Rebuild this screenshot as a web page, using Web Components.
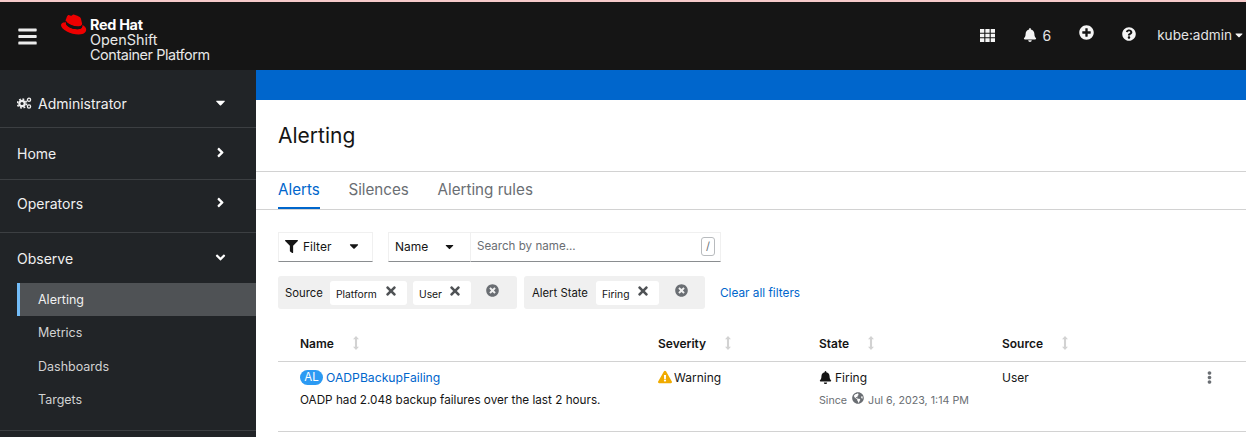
<!DOCTYPE html>
<html>
<head>
<meta charset="utf-8">
<title>Alerting</title>
<style>
html, body { margin: 0; height: 100%; overflow: hidden; background: #fff; font-family: Inter, "Liberation Sans", sans-serif; }
</style>
</head>
<body>
<ocp-app></ocp-app>
<script>
const ICONS = {
    bars: ["0 0 448 512", "M16 132h416c8.837 0 16-7.163 16-16V76c0-8.837-7.163-16-16-16H16C7.163 60 0 67.163 0 76v40c0 8.837 7.163 16 16 16zm0 160h416c8.837 0 16-7.163 16-16v-40c0-8.837-7.163-16-16-16H16c-8.837 0-16 7.163-16 16v40c0 8.837 7.163 16 16 16zm0 160h416c8.837 0 16-7.163 16-16v-40c0-8.837-7.163-16-16-16H16c-8.837 0-16 7.163-16 16v40c0 8.837 7.163 16 16 16z"],
    grid: ["0 0 14 14", "M0 1h4v3.4H0zM5 1h4v3.4H5zM10 1h4v3.4h-4zM0 5.3h4v3.4H0zM5 5.3h4v3.4H5zM10 5.3h4v3.4h-4zM0 9.6h4V13H0zM5 9.6h4V13H5zM10 9.6h4V13h-4z"],
    bell: ["0 0 448 512", "M224 512c35.32 0 63.97-28.65 63.97-64H160.03c0 35.35 28.65 64 63.97 64zm215.39-149.71c-19.32-20.76-55.47-51.99-55.47-154.29 0-77.7-54.48-139.9-127.94-155.16V32c0-17.67-14.32-32-31.98-32s-31.98 14.33-31.98 32v20.84C118.56 68.1 64.08 130.3 64.08 208c0 102.3-36.15 133.53-55.47 154.29-6 6.45-8.66 14.16-8.61 21.71.11 16.4 12.98 32 32.1 32h383.8c19.12 0 32-15.6 32.1-32 .05-7.55-2.61-15.27-8.61-21.71z"],
    plus: ["0 0 512 512", "M256 8C119 8 8 119 8 256s111 248 248 248 248-111 248-248S393 8 256 8zm144 276c0 6.6-5.4 12-12 12h-92v92c0 6.6-5.4 12-12 12h-56c-6.6 0-12-5.4-12-12v-92h-92c-6.6 0-12-5.4-12-12v-56c0-6.6 5.4-12 12-12h92v-92c0-6.6 5.4-12 12-12h56c6.6 0 12 5.4 12 12v92h92c6.6 0 12 5.4 12 12v56z"],
    help: ["0 0 512 512", "M504 256c0 136.997-111.043 248-248 248S8 392.997 8 256C8 119.083 119.043 8 256 8s248 111.083 248 248zM262.655 90c-54.497 0-89.255 22.957-116.549 63.758-3.536 5.286-2.353 12.415 2.715 16.258l34.699 26.31c5.205 3.947 12.621 3.008 16.665-2.122 17.864-22.658 30.113-35.797 57.303-35.797 20.429 0 45.698 13.148 45.698 32.958 0 14.976-12.363 22.667-32.534 33.976C247.128 238.528 216 254.941 216 296v4c0 6.627 5.373 12 12 12h56c6.627 0 12-5.373 12-12v-1.333c0-28.462 83.186-29.647 83.186-106.667 0-58.002-60.165-102-116.531-102zM256 338c-25.365 0-46 20.635-46 46 0 25.364 20.635 46 46 46s46-20.636 46-46c0-25.365-20.635-46-46-46z"],
    caret: ["0 0 320 512", "M31.3 192h257.3c17.8 0 26.7 21.5 14.1 34.1L174.1 354.8c-7.8 7.8-20.5 7.8-28.3 0L17.2 226.1C4.6 213.5 13.5 192 31.3 192z"],
    right: ["0 0 256 512", "M224.3 273l-136 136c-9.4 9.4-24.6 9.4-33.9 0l-22.6-22.6c-9.4-9.4-9.4-24.6 0-33.9l96.4-96.4-96.4-96.4c-9.4-9.4-9.4-24.6 0-33.9L54.3 103c9.4-9.4 24.6-9.4 33.9 0l136 136c9.5 9.4 9.5 24.6.1 34z"],
    down: ["0 0 320 512", "M143 352.3L7 216.3c-9.4-9.4-9.4-24.6 0-33.9l22.6-22.6c9.4-9.4 24.6-9.4 33.9 0l96.4 96.4 96.4-96.4c9.4-9.4 24.6-9.4 33.9 0l22.6 22.6c9.4 9.4 9.4 24.6 0 33.9l-136 136c-9.2 9.4-24.4 9.4-33.8 0z"],
    filter: ["0 0 512 512", "M487.976 0H24.028C2.71 0-8.047 25.866 7.058 40.971L192 225.941V432c0 7.831 3.821 15.17 10.237 19.662l80 55.98C298.02 518.69 320 507.493 320 487.98V225.941l184.947-184.97C520.021 25.896 509.338 0 487.976 0z"],
    times: ["0 0 352 512", "M242.72 256l100.07-100.07c12.28-12.28 12.28-32.19 0-44.48l-22.24-22.24c-12.28-12.28-32.19-12.28-44.48 0L176 189.28 75.93 89.21c-12.28-12.28-32.19-12.28-44.48 0L9.21 111.45c-12.28 12.28-12.28 32.19 0 44.48L109.28 256 9.21 356.07c-12.28 12.28-12.28 32.19 0 44.48l22.24 22.24c12.28 12.28 32.2 12.28 44.48 0L176 322.72l100.07 100.07c12.28 12.28 32.2 12.28 44.48 0l22.24-22.24c12.28-12.28 12.28-32.19 0-44.48L242.72 256z"],
    timesCircle: ["0 0 512 512", "M256 8C119 8 8 119 8 256s111 248 248 248 248-111 248-248S393 8 256 8zm121.6 313.1c4.7 4.7 4.7 12.3 0 17L338 377.6c-4.7 4.7-12.3 4.7-17 0L256 312l-65.1 65.6c-4.7 4.7-12.3 4.7-17 0L134.4 338c-4.7-4.7-4.7-12.3 0-17l65.6-65-65.6-65.1c-4.7-4.7-4.7-12.3 0-17l39.6-39.6c4.7-4.7 12.3-4.7 17 0l65 65.7 65.1-65.6c4.7-4.7 12.3-4.7 17 0l39.6 39.6c4.7 4.7 4.7 12.3 0 17L312 256l65.6 65.1z"],
    warning: ["0 0 576 512", "M569.517 440.013C587.975 472.007 564.806 512 527.94 512H48.054c-36.937 0-59.999-40.055-41.577-71.987L246.423 24.035c18.467-32.009 64.72-31.951 83.154 0l239.94 416zM288 354c-25.405 0-46 20.595-46 46s20.595 46 46 46 46-20.595 46-46-20.595-46-46-46zm-43.673-165.346l7.418 136c.347 6.364 5.609 11.346 11.982 11.346h48.546c6.373 0 11.635-4.982 11.982-11.346l7.418-136c.375-6.874-5.098-12.654-11.982-12.654h-63.383c-6.884 0-12.356 5.78-11.981 12.654z"],
    globe: ["0 0 496 512", "M248 8C111.03 8 0 119.03 0 256s111.03 248 248 248 248-111.03 248-248S384.97 8 248 8zm82.29 357.6c-3.9 3.88-7.99 7.95-11.31 11.28-2.99 3-5.1 6.7-6.17 10.71-1.51 5.66-2.73 11.38-4.77 16.87l-17.39 46.85c-13.76 3-28 4.69-42.65 4.69v-27.38c1.69-12.62-7.64-36.26-22.63-51.25-6-6-9.37-14.14-9.37-22.63v-32.01c0-11.64-6.27-22.34-16.46-27.97-14.37-7.95-34.81-19.06-48.81-26.11-11.48-5.78-22.1-13.14-31.65-21.75l-.8-.72a114.792 114.792 0 0 1-18.06-20.74c-9.38-13.77-24.66-36.42-34.59-51.14 20.47-45.5 57.36-82.04 103.2-101.89l24.01 12.01C203.48 89.74 216 82.01 216 70.11v-11.3c7.99-1.29 16.12-2.11 24.45-2.4l28.3 28.3c6.25 6.25 6.25 16.38 0 22.63L264 112l-10.34 10.34c-3.12 3.12-3.12 8.19 0 11.31l4.69 4.69c3.12 3.12 3.12 8.19 0 11.31l-8 8a8.008 8.008 0 0 1-5.67 2.34h-8.99c-2.08 0-4.08.81-5.58 2.27l-9.92 9.65a8.008 8.008 0 0 0-1.58 9.31l15.59 31.19c2.66 5.32-1.21 11.58-7.15 11.58h-5.64c-1.93 0-3.79-.7-5.24-1.96l-9.28-8.06a16.017 16.017 0 0 0-15.55-3.1l-31.17 10.39a11.95 11.95 0 0 0-8.17 11.34c0 4.53 2.56 8.66 6.61 10.69l11.08 5.54c9.41 4.71 19.79 7.16 30.31 7.16s22.59 27.29 32 32h66.75c8.49 0 16.62 3.37 22.63 9.37l13.69 13.69a30.503 30.503 0 0 1 8.93 21.57 46.536 46.536 0 0 1-13.72 32.98zM417 274.25c-5.79-1.45-10.84-5-14.15-9.97l-17.98-26.97a23.97 23.97 0 0 1 0-26.62l19.59-29.38c2.32-3.47 5.5-6.29 9.24-8.15l12.98-6.49C440.2 193.59 448 223.87 448 256c0 8.67-.74 17.16-1.82 25.54L417 274.25z"],
    kebab: ["0 0 192 512", "M96 184c39.8 0 72 32.2 72 72s-32.2 72-72 72-72-32.2-72-72 32.2-72 72-72zM24 80c0 39.8 32.2 72 72 72s72-32.2 72-72S135.8 8 96 8 24 40.2 24 80zm0 352c0 39.8 32.2 72 72 72s72-32.2 72-72-32.2-72-72-72-72 32.2-72 72z"],
    sort: ["0 0 10 16", "M5 0 8.4 3.6H6.2v8.8h2.2L5 16 1.6 12.4h2.2V3.6H1.6z"]
};

class OcpIcon extends HTMLElement {
    connectedCallback() {
        const [box, d] = ICONS[this.getAttribute("name")];
        const size = this.getAttribute("size") || "14";
        this.attachShadow({mode: "open"}).innerHTML = `
            <style>
                :host { display: inline-flex; flex: none; color: inherit; }
                svg { display: block; width: ${size}px; height: ${size}px; fill: currentColor; }
            </style>
            <svg viewBox="${box}"><path d="${d}"/></svg>`;
    }
}

class OcpMasthead extends HTMLElement {
    connectedCallback() {
        this.attachShadow({mode: "open"}).innerHTML = `
            <style>
                :host { display: flex; align-items: center; height: 68px; background: #151515; color: #f0f0f0; flex: none; }
                .toggle { display: flex; margin-left: 17px; margin-right: 21px; color: #ececec; }
                .brand { display: flex; gap: 3px; align-items: flex-start; margin-top: 5px; }
                .brand svg { display: block; width: 28px; height: 22px; margin-top: -2px; }
                .name { font-size: 14.400px; line-height: 15px; font-weight: 400; color: #e8e8e8; white-space: nowrap; padding-top: 1px; }
                .name b { display: block; color: #fff; font-weight: 700; letter-spacing: -.3px; }
                .name span { letter-spacing: -.42px; }
                .tools { margin-left: auto; display: flex; align-items: center; font-size: 13.600px; color: #e4e4e4; padding-right: 1px; margin-top: -2px; }
                .tools ocp-icon { color: #f5f5f5; }
                .bell { display: flex; align-items: center; gap: 5px; margin: 0 28px 0 28px; font-size: 14px; }
                .plus { margin-top: -2px; margin-right: 28px; }
                .help { margin-right: 21px; }
                .user { display: flex; align-items: center; gap: 1px; white-space: nowrap; }
            </style>
            <span class="toggle"><ocp-icon name="bars" size="21"></ocp-icon></span>
            <div class="brand">
                <svg viewBox="0 0 28 22">
                    <path fill="#e00" d="M18.6 12.6c1.8 0 4.500-.4 4.500-2.500 0-.2 0-.3 0-.5l-1.100-4.700c-.2-1-.5-1.500-2.300-2.400C18.300 1.800 15.300.6 14.400.6c-.8 0-1.100 1.100-2.100 1.100-.9 0-1.600-.8-2.500-.8-.8 0-1.400.6-1.800 1.700 0 0-1.200 3.400-1.400 3.900 0 .1 0 .2 0 .3 0 1.300 5.300 5.800 12.000 5.800z"/>
                    <path fill="#e00" d="M23.100 11c.2 1.100.2 1.200.2 1.300 0 1.900-2.100 2.900-4.800 2.900-6.200 0-11.600-3.600-11.600-6 0-.3.100-.7.200-1-2.200.1-5.100.5-5.100 3 0 4.200 9.900 9.300 17.700 9.300 6 0 7.500-2.700 7.500-4.900 0-1.700-1.500-3.700-4.100-4.600z"/>
                    <path fill="#151515" d="M23.100 10.100c.2 1.100.2 1.900.2 2.200 0 1.900-2.100 2.900-4.800 2.900-6.200 0-11.600-3.600-11.600-6 0-.3.200-1.500.4-2.100 0 1.300 5.300 5.500 11.300 5.500 1.800 0 4.500-.4 4.500-2.500z"/>
                </svg>
                <div class="name"><b>Red Hat</b>OpenShift<br><span>Container Platform</span></div>
            </div>
            <div class="tools">
                <ocp-icon name="grid" size="15"></ocp-icon>
                <span class="bell"><ocp-icon name="bell" size="14"></ocp-icon><span>6</span></span>
                <span class="plus"><ocp-icon name="plus" size="15"></ocp-icon></span>
                <span class="help"><ocp-icon name="help" size="14"></ocp-icon></span>
                <span class="user">kube:admin<ocp-icon name="caret" size="12"></ocp-icon></span>
            </div>`;
    }
}

// one block of the left nav, row height and vertical nudge come from attributes
class OcpNavSection extends HTMLElement {
    connectedCallback() {
        const icon = this.getAttribute("arrow");
        const top = this.getAttribute("top") || 0;
        const bottom = this.getAttribute("bottom") || 0;
        this.attachShadow({mode: "open"}).innerHTML = `
            <style>
                :host { display: block; border-bottom: 1px solid #3c3f42; }
                .row { display: flex; align-items: center; box-sizing: border-box; height: ${this.getAttribute("height")}px; padding: ${top}px 28.500px ${bottom}px 17px; font-size: 14px; color: #f0f0f0; }
                .row ocp-icon { margin: -2px 0 0 auto; color: #fff; }
                :host([open]) .sub { padding-bottom: 13.500px; }
            </style>
            <div class="row"><slot name="label"></slot><ocp-icon name="${icon}" size="15"></ocp-icon></div>
            <div class="sub"><slot></slot></div>`;
    }
}

class OcpNavLink extends HTMLElement {
    connectedCallback() {
        this.attachShadow({mode: "open"}).innerHTML = `
            <style>
                :host { display: flex; align-items: center; height: 33.500px; margin-left: 17px; padding-left: 21px; font-size: 12.500px; color: #d2d2d2; }
                :host([current]) { height: 33px; background: #4f5255; box-shadow: inset 3px 0 0 #73bcf7; color: #f0f0f0; }
            </style>
            <slot></slot>`;
    }
}

class OcpSidebar extends HTMLElement {
    connectedCallback() {
        this.attachShadow({mode: "open"}).innerHTML = `
            <style>
                :host { display: block; width: 256px; flex: none; background: #212427; }
                .persp { display: inline-flex; align-items: center; gap: 6px; }
                .persp svg { width: 15px; height: 12px; fill: #f0f0f0; }
            </style>
            <ocp-nav-section height="57" top="9" arrow="caret">
                <span slot="label" class="persp">
                    <svg viewBox="0 0 15 12">
                        <circle cx="5" cy="6.500" r="2.700" fill="none" stroke="#f0f0f0" stroke-width="2.200"/>
                        <circle cx="5" cy="6.500" r="4.500" fill="none" stroke="#f0f0f0" stroke-width="1.600" stroke-dasharray="1.800 1.730"/>
                        <circle cx="12" cy="2.800" r="1.600" fill="none" stroke="#f0f0f0" stroke-width="1.300"/>
                        <circle cx="12" cy="9.500" r="1.600" fill="none" stroke="#f0f0f0" stroke-width="1.300"/>
                    </svg>Administrator</span>
            </ocp-nav-section>
            <ocp-nav-section height="51" arrow="right"><span slot="label">Home</span></ocp-nav-section>
            <ocp-nav-section height="52" bottom="6" arrow="right"><span slot="label">Operators</span></ocp-nav-section>
            <ocp-nav-section height="50" arrow="down" open>
                <span slot="label">Observe</span>
                <ocp-nav-link current>Alerting</ocp-nav-link>
                <ocp-nav-link>Metrics</ocp-nav-link>
                <ocp-nav-link>Dashboards</ocp-nav-link>
                <ocp-nav-link>Targets</ocp-nav-link>
            </ocp-nav-section>`;
    }
}

class OcpTabs extends HTMLElement {
    connectedCallback() {
        this.attachShadow({mode: "open"}).innerHTML = `
            <style>
                :host { display: flex; gap: 28.600px; padding-left: 22px; height: 37px; border-bottom: 1px solid #d2d2d2; font-size: 15.200px; color: #6a6e73; flex: none; }
                span { display: flex; align-items: center; padding-bottom: 2px; box-sizing: border-box; height: 37px; }
                .on { color: #06c; box-shadow: inset 0 -2px 0 #06c; }
            </style>
            <span class="on">Alerts</span><span>Silences</span><span>Alerting rules</span>`;
    }
}

class OcpToolbar extends HTMLElement {
    connectedCallback() {
        this.attachShadow({mode: "open"}).innerHTML = `
            <style>
                :host { display: flex; padding: 22px 0 0 22px; font-size: 12px; color: #151515; flex: none; }
                .box { display: flex; align-items: center; box-sizing: border-box; height: 30px; padding-bottom: 2px; border: 1px solid #f0f0f0; border-bottom-color: #8a8d90; background: #fff; }
                .filter { width: 95px; padding-left: 6px; gap: 5px; margin-right: 15px; }
                .filter ocp-icon:last-child { margin-left: auto; margin-right: 11.500px; }
                .name { width: 82px; padding-left: 6px; border-right: 0; }
                .name ocp-icon { margin-left: auto; margin-right: 14px; }
                .search { width: 251px; padding-left: 6px; padding-right: 5px; color: #6a6e73; font-size: 11.600px; }
                kbd { margin-left: auto; box-sizing: border-box; width: 14px; height: 19px; border: 1px solid #b8bbbe; border-radius: 3px; font: 11px/17px Inter, sans-serif; text-align: center; color: #6a6e73; }
            </style>
            <div class="box filter"><ocp-icon name="filter" size="13"></ocp-icon><span>Filter</span><ocp-icon name="caret" size="14"></ocp-icon></div>
            <div class="box name"><span>Name</span><ocp-icon name="caret" size="13"></ocp-icon></div>
            <div class="box search"><span>Search by name...</span><kbd>/</kbd></div>`;
    }
}

class OcpChipGroup extends HTMLElement {
    connectedCallback() {
        this.attachShadow({mode: "open"}).innerHTML = `
            <style>
                :host { display: flex; align-items: center; box-sizing: border-box; height: 33px; padding-left: var(--pad); background: #f0f0f0; border-radius: 3px; font-size: 11.300px; color: #151515; }
                .label { width: var(--label); margin-right: 8px; white-space: nowrap; }
                .chips { display: flex; gap: 6px; margin-right: var(--end); }
                ocp-icon { color: #6a6e73; margin-top: -5px; }
            </style>
            <span class="label">${this.getAttribute("label")}</span>
            <div class="chips"><slot></slot></div>
            <ocp-icon name="timesCircle" size="13"></ocp-icon>`;
    }
}

class OcpChip extends HTMLElement {
    connectedCallback() {
        this.attachShadow({mode: "open"}).innerHTML = `
            <style>
                :host { display: flex; align-items: center; box-sizing: border-box; height: 24px; padding: 0 9px 0 6px; background: #fff; border-radius: 3px; font-size: 10.300px; color: #151515; }
                span { margin-right: auto; padding-top: 2px; }
                ocp-icon { color: #4f5255; margin-top: -3px; }
            </style>
            <span><slot></slot></span><ocp-icon name="times" size="14"></ocp-icon>`;
        this.style.width = this.getAttribute("width") + "px";
    }
}

class OcpFilters extends HTMLElement {
    connectedCallback() {
        this.attachShadow({mode: "open"}).innerHTML = `
            <style>
                :host { display: flex; align-items: center; gap: 7px; padding: 14px 0 0 22px; flex: none; }
                a { margin-left: 8px; font-size: 11.800px; color: #06c; white-space: nowrap; }
            </style>
            <ocp-chip-group label="Source" style="width:239px; --pad:7px; --label:37px; --end:15px">
                <ocp-chip width="77">Platform</ocp-chip>
                <ocp-chip width="58">User</ocp-chip>
            </ocp-chip-group>
            <ocp-chip-group label="Alert State" style="width:181px; --pad:8px; --label:56px; --end:16px">
                <ocp-chip width="63">Firing</ocp-chip>
            </ocp-chip-group>
            <a>Clear all filters</a>`;
    }
}

class OcpAlertsTable extends HTMLElement {
    connectedCallback() {
        this.attachShadow({mode: "open"}).innerHTML = `
            <style>
                :host { display: block; margin: 18px 0 0 22px; font-size: 12px; color: #151515; flex: none; }
                .grid { display: grid; grid-template-columns: 358px 161px 183px 1fr 43px; padding-left: 22px; }
                .head { padding-bottom: 2px; height: 32px; align-items: center; border-bottom: 1px solid #d2d2d2; font-weight: 600; }
                .head div { display: flex; align-items: center; gap: 15px; }
                .head ocp-icon { color: #d2d2d2; }
                .row { border-bottom: 1px solid #d2d2d2; padding-top: 7px; height: 62px; }
                .cell { display: flex; align-items: center; gap: 3px; height: 16px; }
                .badge { display: inline-flex; align-items: center; justify-content: center; width: 23px; height: 15px; border-radius: 8px; background: #2b9af3; color: #fff; font-size: 11.500px; }
                .warn { gap: 2px; }
                a { color: #06c; font-size: 12.200px; }
                .second { margin-top: 7px; display: flex; align-items: center; height: 16px; white-space: nowrap; font-size: 11.730px; }
                .muted { color: #6a6e73; font-size: 10.700px; }
                .muted ocp-icon { margin: -4px 4px 0 5px; color: #6a6e73; }
                .kebab { color: #6a6e73; }
            </style>
            <div class="grid head">
                <div>Name<ocp-icon name="sort" size="14"></ocp-icon></div>
                <div>Severity<ocp-icon name="sort" size="14"></ocp-icon></div>
                <div>State<ocp-icon name="sort" size="14"></ocp-icon></div>
                <div>Source<ocp-icon name="sort" size="14"></ocp-icon></div>
                <div></div>
            </div>
            <div class="grid row">
                <div>
                    <div class="cell"><span class="badge">AL</span><a>OADPBackupFailing</a></div>
                    <div class="second">OADP had 2.048 backup failures over the last 2 hours.</div>
                </div>
                <div><div class="cell warn"><ocp-icon name="warning" size="14" style="color:#f0ab00"></ocp-icon>Warning</div></div>
                <div>
                    <div class="cell"><ocp-icon name="bell" size="13"></ocp-icon>Firing</div>
                    <div class="second muted">Since<ocp-icon name="globe" size="12"></ocp-icon>Jul 6, 2023, 1:14 PM</div>
                </div>
                <div><div class="cell">User</div></div>
                <div><div class="cell kebab"><ocp-icon name="kebab" size="13"></ocp-icon></div></div>
            </div>`;
    }
}

class OcpApp extends HTMLElement {
    connectedCallback() {
        this.attachShadow({mode: "open"}).innerHTML = `
            <style>
                :host { display: flex; flex-direction: column; height: 437px; overflow: hidden; border-top: 2px solid #f6c9c9; box-sizing: border-box; }
                .body { display: flex; flex: 1; min-height: 0; }
                main { flex: 1; display: flex; flex-direction: column; min-width: 0; background: #fff; }
                .banner { height: 30px; background: #06c; flex: none; }
                h1 { margin: 0; padding-left: 22px; height: 71px; display: flex; align-items: center; font-size: 21px; font-weight: 400; color: #151515; border-bottom: 1px solid #d2d2d2; flex: none; }
            </style>
            <ocp-masthead></ocp-masthead>
            <div class="body">
                <ocp-sidebar></ocp-sidebar>
                <main>
                    <div class="banner"></div>
                    <h1>Alerting</h1>
                    <ocp-tabs></ocp-tabs>
                    <ocp-toolbar></ocp-toolbar>
                    <ocp-filters></ocp-filters>
                    <ocp-alerts-table></ocp-alerts-table>
                </main>
            </div>`;
    }
}

customElements.define("ocp-icon", OcpIcon);
customElements.define("ocp-masthead", OcpMasthead);
customElements.define("ocp-nav-section", OcpNavSection);
customElements.define("ocp-nav-link", OcpNavLink);
customElements.define("ocp-sidebar", OcpSidebar);
customElements.define("ocp-tabs", OcpTabs);
customElements.define("ocp-toolbar", OcpToolbar);
customElements.define("ocp-chip-group", OcpChipGroup);
customElements.define("ocp-chip", OcpChip);
customElements.define("ocp-filters", OcpFilters);
customElements.define("ocp-alerts-table", OcpAlertsTable);
customElements.define("ocp-app", OcpApp);
</script>
</body>
</html>
